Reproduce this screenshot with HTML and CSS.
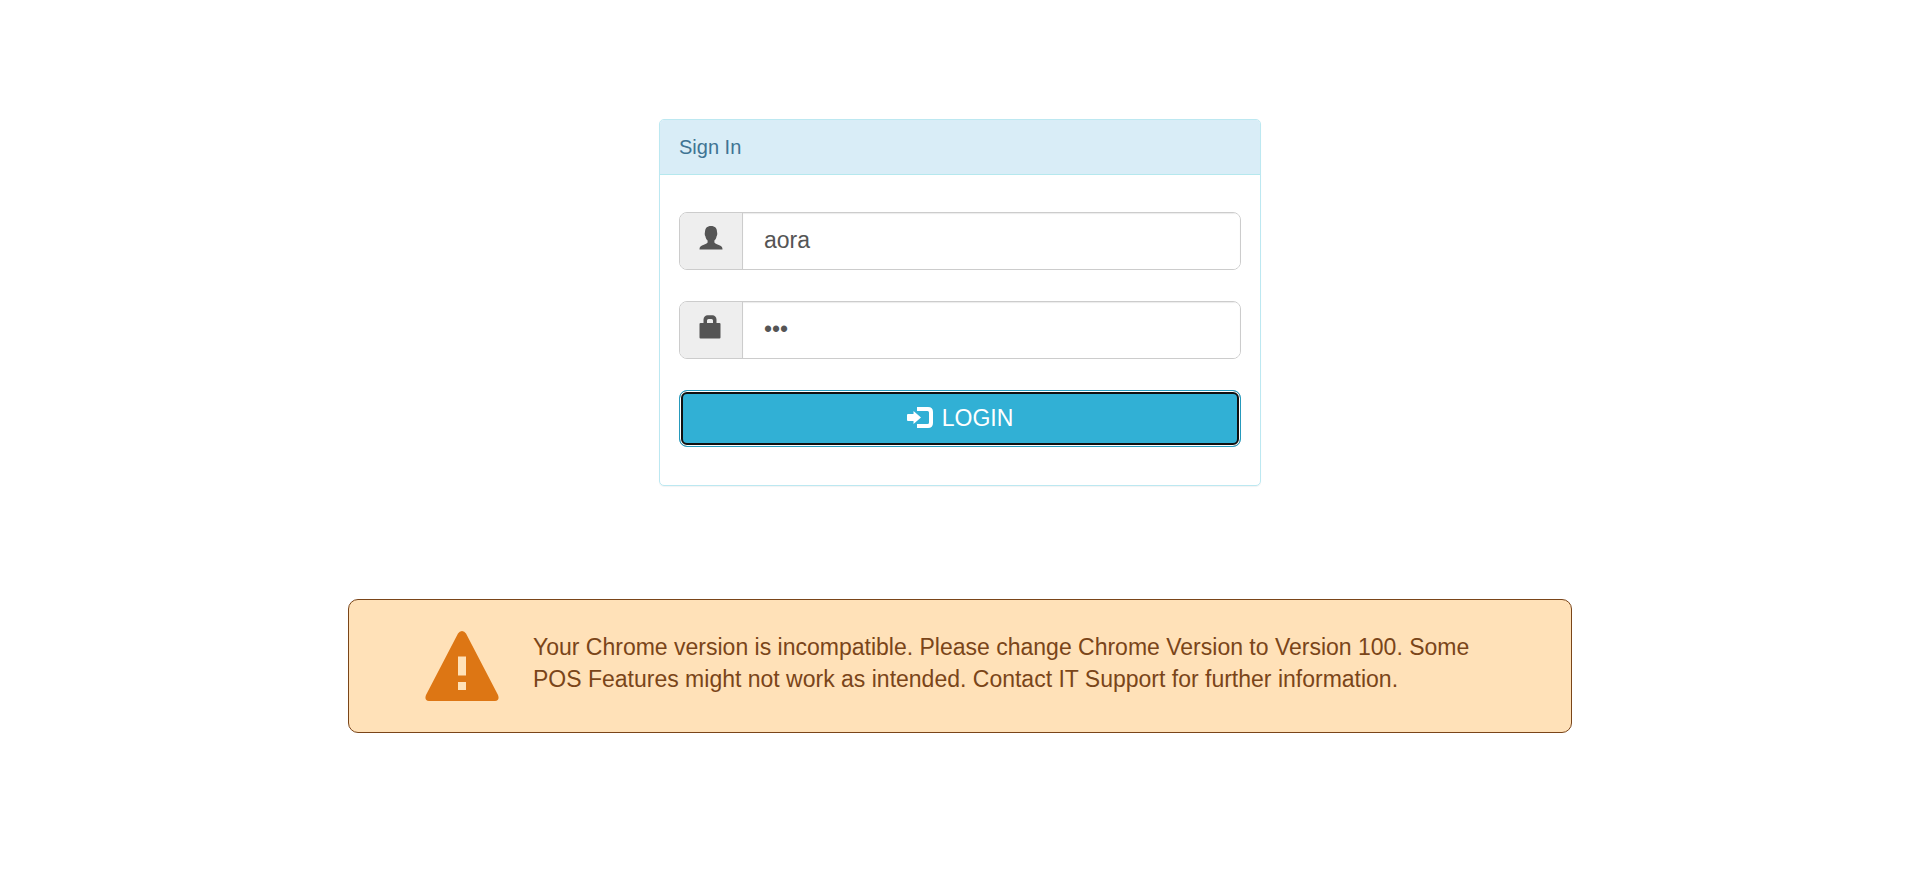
FILE: index.html
```
<!DOCTYPE html>
<html lang="en">
<head>
<meta charset="utf-8">
<meta name="viewport" content="width=device-width, initial-scale=1">
<title>Sign In</title>
<link rel="stylesheet" href="styles.css">
</head>
<body>
<main class="page">
  <section class="panel">
    <h1 class="panel-heading">Sign In</h1>
    <form class="panel-body">
      <div class="input-group">
        <label class="addon" for="username" aria-label="Username">
          <svg class="icon" viewBox="0 0 24 24" aria-hidden="true"><path d="M12 0C8 0 6 2.200 6 6C5.500 7 5.700 9.500 6.400 10.200C6.800 12.500 7.600 13.500 8.600 14.600V16.600C8.200 17.800 5.500 18.400 3 19.600C1.200 20.500 .5 21.200 .5 23.500H23.500C23.500 21.200 22.800 20.500 21 19.600C18.500 18.400 15.800 17.800 15.400 16.600V14.600C16.400 13.500 17.200 12.500 17.600 10.200C18.300 9.500 18.500 7 18 6C18 2.200 16 0 12 0Z"/></svg>
        </label>
        <input class="field" id="username" type="text" value="aora">
      </div>
      <div class="input-group">
        <label class="addon" for="password" aria-label="Password">
          <svg class="icon" viewBox="0 0 24 24" aria-hidden="true"><path fill-rule="evenodd" d="M4.500 8V4.500C4.500 2 6.500 .3 8.500 .3H13.500C15.500 .3 17.500 2 17.500 4.500V8H20.500Q21.500 8 21.500 9V22.500Q21.500 23.500 20.500 23.500H1.500Q.5 23.500 .5 22.500V9Q.5 8 1.500 8ZM8 8H14V5.500Q14 4 12.500 4H9.500Q8 4 8 5.500Z"/></svg>
        </label>
        <input class="field" id="password" type="password" value="abc">
      </div>
      <button class="login" type="button">
        <svg class="login-icon" viewBox="0 0 26 24" aria-hidden="true"><path d="M10 0H21Q26 0 26 5V16Q26 21 21 21H10V17H20.500Q22 17 22 15.500V5.500Q22 4 20.500 4H10ZM6.500 4L14 10.500L6.500 17V14H1Q0 14 0 13V8Q0 7 1 7H6.500Z"/></svg>
        <span>LOGIN</span>
      </button>
    </form>
  </section>
  <div class="alert" role="alert">
    <svg class="warning" viewBox="0 0 74 70" aria-hidden="true"><path fill-rule="evenodd" d="M33 2.500Q34.500 0 37 0Q39.500 0 41 2.500L73 64Q75 69.500 70 70H4Q-1 69.500 1 64ZM33 25.500V44.500H41V25.500ZM33 51V59H41V51Z"/></svg>
    <p class="alert-text">Your Chrome version is incompatible. Please change Chrome Version to Version 100. Some POS Features might not work as intended. Contact IT Support for further information.</p>
  </div>
</main>
</body>
</html>
```
FILE: styles.css
```
* {
  box-sizing: border-box;
}

body {
  margin: 0;
  background: #fff;
  font-family: "Liberation Sans", Arial, sans-serif;
}

.page {
  display: flex;
  flex-direction: column;
  align-items: center;
  gap: 113px;
  padding: 119px 24px;
}

.panel {
  width: 100%;
  max-width: 602px;
  border: 1px solid #bce8f1;
  border-radius: 5px;
  box-shadow: 0 1px 1px rgba(0, 0, 0, 0.05);
}

.panel-heading {
  margin: 0;
  padding: 16px 19px;
  border-bottom: 1px solid #b5e8ee;
  border-radius: 4px 4px 0 0;
  background: #d9edf7;
  color: #3f7493;
  font-size: 20px;
  font-weight: 400;
  line-height: 22px;
}

.panel-body {
  display: flex;
  flex-direction: column;
  gap: 31px;
  padding: 37px 19px 38px;
}

.input-group {
  display: flex;
  height: 58px;
  border: 1px solid #ccc;
  border-radius: 8px;
  overflow: hidden;
}

.addon {
  display: flex;
  align-items: center;
  padding: 0 19px 6px 19px;
  border-right: 1px solid #ccc;
  background: #eee;
  color: #555;
}

.icon {
  width: 24px;
  height: 24px;
  fill: currentColor;
}

.field {
  flex: 1;
  min-width: 0;
  padding: 0 21px 1px;
  border: 0;
  outline: 0;
  background: #fff;
  box-shadow: inset 0 1px 1px rgba(0, 0, 0, 0.08);
  color: #555;
  font: 23px "Liberation Sans", Arial, sans-serif;
}

.login {
  display: flex;
  align-items: center;
  justify-content: center;
  gap: 9px;
  height: 57px;
  padding: 0;
  border: 1px solid #269abc;
  border-radius: 8px;
  background: #31b0d5;
  box-shadow: inset 0 0 0 1px #fff, inset 0 0 0 3px #101010;
  color: #fff;
  font: 23px "Liberation Sans", Arial, sans-serif;
}

.login-icon {
  width: 26px;
  height: 24px;
  fill: currentColor;
}

.alert {
  display: flex;
  align-items: center;
  gap: 34px;
  width: 100%;
  max-width: 1224px;
  padding: 31px 76px;
  border: 1px solid #7a4519;
  border-radius: 10px;
  background: #ffe1b8;
  color: #7a4519;
}

.warning {
  flex: none;
  width: 74px;
  height: 70px;
  fill: #dd7614;
}

.alert-text {
  margin: 0;
  padding-bottom: 6px;
  font-size: 23px;
  line-height: 32px;
}
```
